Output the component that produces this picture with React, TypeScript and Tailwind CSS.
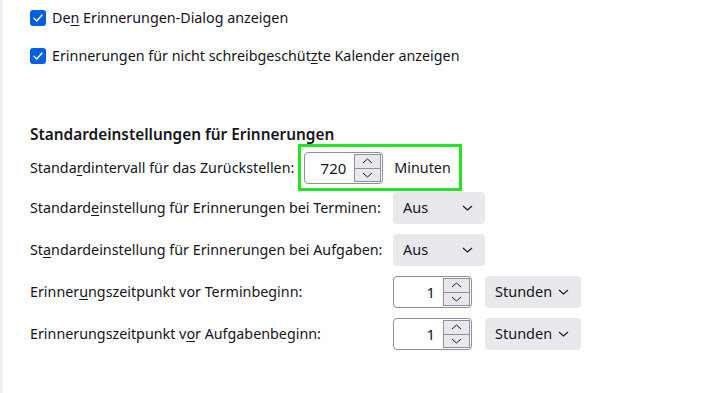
import React from "react"

const font = { fontFamily: '"Noto Sans", "Segoe UI", sans-serif' }

function U({ children }: { children: React.ReactNode }) {
  return <span className="underline underline-offset-2">{children}</span>
}

function Checkbox() {
  return (
    <span className="flex h-4 w-4 shrink-0 items-center justify-center rounded-[3px] bg-[#0061e0]">
      <svg width="12" height="12" viewBox="0 0 12 12" fill="none">
        <path d="M2 6.2 L4.8 9 L10 3" stroke="white" strokeWidth="1.4" strokeLinecap="round" strokeLinejoin="round" />
      </svg>
    </span>
  )
}

function Chevron({ up = false }: { up?: boolean }) {
  return (
    <svg width="11" height="6" viewBox="0 0 11 6" fill="none">
      <path d={up ? "M1 5 L5.5 1 L10 5" : "M1 1 L5.5 5 L10 1"} stroke="#15141a" strokeWidth="1" />
    </svg>
  )
}

function NumberInput({ value, width }: { value: string; width: string }) {
  return (
    <div className={`flex h-8 ${width} items-stretch rounded-[4px] border border-[#8f8f9d] bg-white`}>
      <span className="flex flex-1 items-center justify-end pr-2 text-[15px]">{value}</span>
      <div className="my-[1px] mr-[1px] flex w-[27px] flex-col border border-[#8f8f9d] bg-[#e9e9ed]">
        <span className="flex flex-1 items-center justify-center border-b border-[#8f8f9d]">
          <Chevron up />
        </span>
        <span className="flex flex-1 items-center justify-center">
          <Chevron />
        </span>
      </div>
    </div>
  )
}

function Select({ label, width }: { label: string; width: string }) {
  return (
    <div className={`flex h-8 ${width} items-center justify-between rounded-[4px] bg-[#e9e9ed] pl-[10px] pr-3 text-[14.5px]`}>
      <span>{label}</span>
      <svg width="11" height="6" viewBox="0 0 11 6" fill="none">
        <path d="M1 1 L5.5 5 L10 1" stroke="#15141a" strokeWidth="1.1" />
      </svg>
    </div>
  )
}

export default function App() {
  return (
    <div className="flex h-[393px] w-[709px] overflow-hidden whitespace-nowrap bg-white text-[14.3px] text-[#15141a]" style={font}>
      <div className="w-[3px] shrink-0 bg-[#f0f0f4]" />
      <div className="flex-1 pl-[27px] pt-[9px]">
        {/* Checkboxes */}
        <label className="flex h-[18px] items-center gap-[6px]">
          <Checkbox />
          <span>De<U>n</U> Erinnerungen-Dialog anzeigen</span>
        </label>
        <label className="mt-[20px] flex h-[18px] items-center gap-[6px]">
          <Checkbox />
          <span>Erinnerungen für nicht schreibgeschüt<U>z</U>te Kalender anzeigen</span>
        </label>

        {/* Standardeinstellungen */}
        <h2 className="mt-[60px] text-[15.4px] font-semibold leading-5">Standardeinstellungen für Erinnerungen</h2>

        <div className="mt-[7px] flex h-8 items-center gap-[10px]">
          <span>Standa<U>r</U>dintervall für das Zurückstellen:</span>
          <div className="relative flex items-center gap-[11px]">
            <NumberInput value="720" width="w-[79px]" />
            <span>Minuten</span>
            <div className="pointer-events-none absolute -bottom-[7px] -left-[6px] -right-[11px] -top-[8px] border-[3px] border-[#22e622]" />
          </div>
        </div>

        <div className="mt-[8px] grid grid-cols-[363px_auto] items-center gap-y-[10px]">
          <span>Standard<U>e</U>instellung für Erinnerungen bei Terminen:</span>
          <Select label="Aus" width="w-[92px]" />

          <span>St<U>a</U>ndardeinstellung für Erinnerungen bei Aufgaben:</span>
          <Select label="Aus" width="w-[92px]" />

          <span>Erinner<U>u</U>ngszeitpunkt vor Terminbeginn:</span>
          <div className="flex items-center gap-[13px]">
            <NumberInput value="1" width="w-[79px]" />
            <Select label="Stunden" width="w-[96px]" />
          </div>

          <span>Erinnerungszeitpunkt v<U>o</U>r Aufgabenbeginn:</span>
          <div className="flex items-center gap-[13px]">
            <NumberInput value="1" width="w-[79px]" />
            <Select label="Stunden" width="w-[96px]" />
          </div>
        </div>
      </div>
    </div>
  )
}
